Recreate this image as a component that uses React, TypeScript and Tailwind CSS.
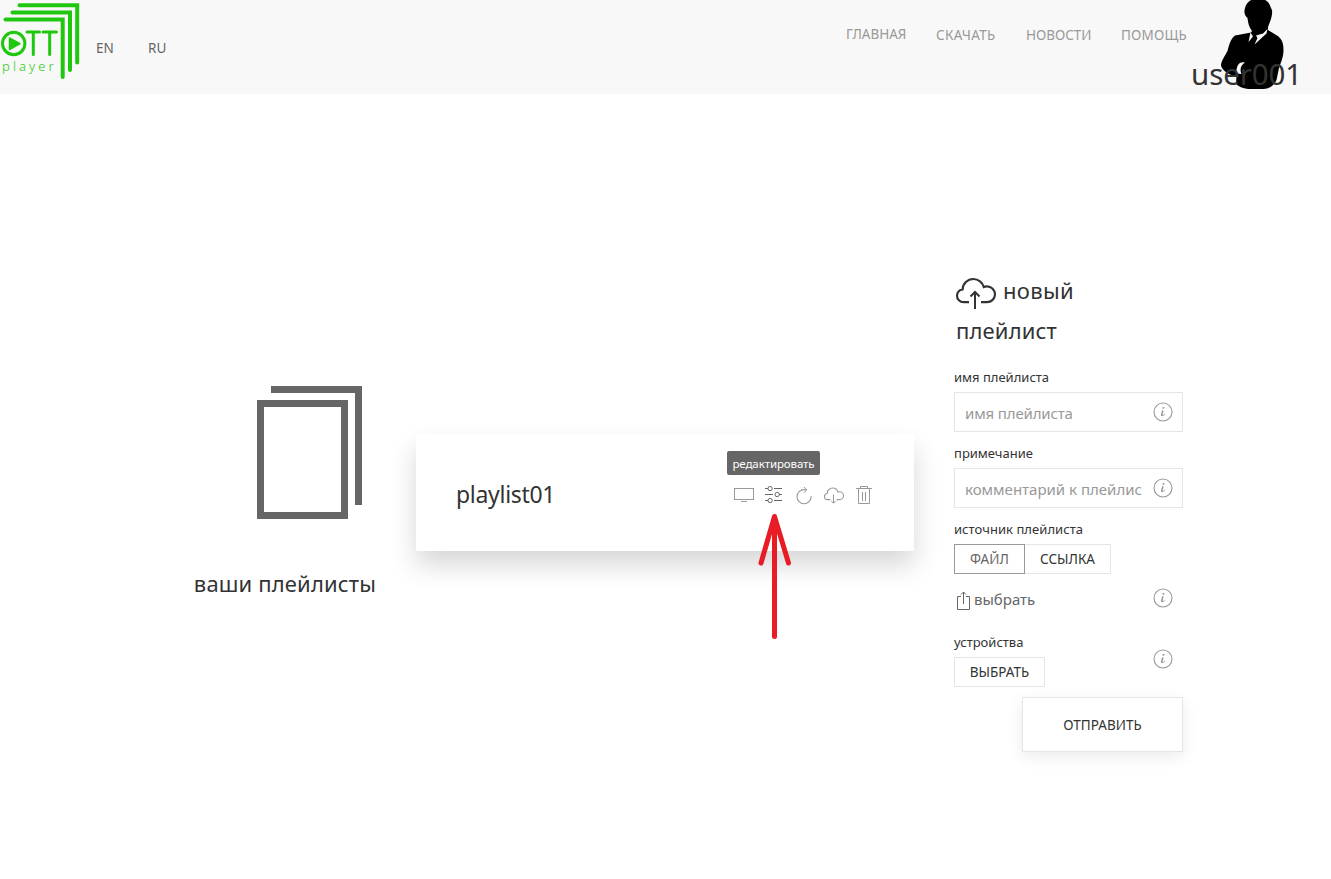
import type { ReactNode } from 'react';

const CLOUD =
  'M6.5,14.61 L3.75,14.61 C1.96,14.61 0.5,13.17 0.5,11.39 C0.5,9.76 1.72,8.41 3.31,8.2 C3.38,5.31 5.75,3 8.68,3 C11.19,3 13.31,4.71 13.89,7.02 C14.39,6.8 14.93,6.68 15.5,6.68 C17.71,6.68 19.5,8.45 19.5,10.64 C19.5,12.83 17.71,14.6 15.5,14.6 L12.5,14.6';

function Icon({ className, children }: { className: string; children: ReactNode }) {
  return (
    <svg viewBox="0 0 20 20" className={'block shrink-0 overflow-visible ' + className} fill="none" stroke="currentColor">
      {children}
    </svg>
  );
}

function InfoIcon() {
  return (
    <Icon className="h-5 w-5 text-[#999]">
      <path
        stroke="none"
        fill="currentColor"
        d="M12.13,11.59 C11.97,12.84 10.35,14.12 9.1,14.16 C6.17,14.2 9.89,9.46 8.74,8.37 C9.3,8.16 10.62,7.83 10.62,8.81 C10.62,9.63 10.12,10.55 9.88,11.32 C8.66,15.16 12.13,11.15 12.14,11.18 C12.16,11.21 12.16,11.35 12.13,11.59 Z M11.56,5.67 C11.56,6.67 9.36,7.15 9.36,6.03 C9.36,5 11.56,4.54 11.56,5.67 Z"
      />
      <circle cx="10" cy="10" r="9" strokeWidth="1.1" />
    </Icon>
  );
}

function Logo() {
  return (
    <div className="relative h-[82px] w-[82px] shrink-0 text-[#1fc80f]">
      <svg viewBox="0 0 82 82" className="block h-[82px] w-[82px]" fill="none" stroke="currentColor" strokeWidth="4" strokeLinecap="round">
        <path d="M19.5 5.3H77.2V62.5M12.5 12.5H70V70M5.5 19.5H62.7V77" />
        <circle cx="13.7" cy="43.5" r="11.2" strokeWidth="3" />
        <path d="M9.5 38V49.5L20 43.7Z" fill="currentColor" strokeWidth="1.5" strokeLinejoin="round" />
        <path d="M27 32H39.5M43 32H56.5M33.3 32V54.5M49.7 32V54.5" strokeWidth="3" />
      </svg>
      <span className="absolute left-[2px] top-[57px] text-[13px] font-light leading-[18px] tracking-[3.1px]">player</span>
    </div>
  );
}

function Avatar() {
  return (
    <svg viewBox="0 0 66 90" className="block h-[90px] w-[66px]">
      <path
        d="M32 0H46C50 2 51 5 52 8C54 11 53 15 52 19C51 22 50 24 49 27L49 30L58 35.5C63 39 64.5 43 64.5 50C64.5 57 62 62 60 68L57.5 80C55 86 50 88.5 44 89H32C26 89 20 87 17 84L17.5 76C12 76 3 71 2 65.5C2 61 6 56 8.5 51C10 45 12 38 16 35.5L32 32.5L33 31C30 27 29 23 28.5 18C25 15 25 11 26 8C27 4 29 2 32 0Z"
        fill="#000"
      />
      <path d="M31.5 32.5L29.5 42L34 36.5ZM48.5 29L44 33.5L37 35.5L38.5 38L35.5 44.5L47.5 33.5Z" fill="#f8f8f8" />
      <path d="M26 62.5C20 61 17 66 17.5 73.5L22.5 74C20.5 69 22 65 26 62.5Z" fill="#f8f8f8" />
    </svg>
  );
}

const NAV = [
  { label: 'ГЛАВНАЯ', cls: 'w-[90px] tracking-[-0.05px]' },
  { label: 'СКАЧАТЬ', cls: 'w-[90px] tracking-[0.3px] pt-px' },
  { label: 'НОВОСТИ', cls: 'w-[95px] tracking-[-0.05px] pt-px' },
  { label: 'ПОМОЩЬ', cls: 'w-[70px] tracking-[0.2px] pt-px' },
];

function Header() {
  return (
    <header className="flex h-[94px] items-start bg-[#f8f8f8]">
      <Logo />
      <div className="flex pl-[14px] pt-[38px] text-[13.5px] leading-5 text-[#666]">
        <span className="w-[52px]">EN</span>
        <span>RU</span>
      </div>
      <nav className="ml-auto flex pt-[24px] text-[13.5px] leading-5 text-[#999]">
        {NAV.map((n) => (
          <span key={n.label} className={'whitespace-nowrap ' + n.cls}>
            {n.label}
          </span>
        ))}
      </nav>
      <div className="relative h-[94px] w-[140px] pl-[28px]">
        <Avatar />
        <span className="absolute left-0 top-[54px] text-[29.5px] leading-[40px] tracking-[-0.1px] text-[#333]">user001</span>
      </div>
    </header>
  );
}

function PlaylistCard() {
  return (
    <section className="relative ml-10 mt-[340px] flex h-[117px] w-[498px] items-start justify-between bg-white pl-10 pr-10 shadow-[0_14px_25px_rgba(0,0,0,0.16)]">
      <h3 className="mt-[43px] text-[23px] leading-[35px] tracking-[-0.3px] text-[#333]">playlist01</h3>
      <div className="mt-[51px] flex gap-[10px] text-[#999]">
        <Icon className="h-5 w-5">
          <rect x="7" y="16" width="6" height="1" fill="currentColor" stroke="none" />
          <rect x=".5" y="3.5" width="19" height="11" />
        </Icon>
        <Icon className="h-5 w-5 text-[#666]">
          <ellipse cx="6.11" cy="3.55" rx="2.11" ry="2.15" />
          <ellipse cx="6.11" cy="15.55" rx="2.11" ry="2.15" />
          <circle cx="13.15" cy="9.55" r="2.15" />
          <path stroke="none" fill="currentColor" d="M1 3h3v1H1zM10 3h8v1h-8zM1 9h8v1H1zM15 9h3v1h-3zM1 15h3v1H1zM10 15h8v1h-8z" />
        </Icon>
        <Icon className="h-5 w-5">
          <path
            strokeWidth="1.1"
            d="M17.08,11.15 C17.09,11.31 17.1,11.47 17.1,11.64 C17.1,15.53 13.94,18.69 10.05,18.69 C6.16,18.68 3,15.53 3,11.63 C3,7.74 6.16,4.58 10.05,4.58 C10.9,4.58 11.71,4.73 12.46,5"
          />
          <polyline points="9.9 2 12.79 4.89 9.79 7.9" />
        </Icon>
        <Icon className="h-5 w-5">
          <path strokeWidth="1.1" d={CLOUD} />
          <polyline points="11.75 16 9.5 18.25 7.25 16" />
          <path d="M9.5,18 L9.5,9.5" />
        </Icon>
        <Icon className="h-5 w-5">
          <polyline points="6.5 3 6.5 1.5 13.5 1.5 13.5 3" />
          <polyline points="4.5 4 4.5 18.5 15.5 18.5 15.5 4" />
          <path stroke="none" fill="currentColor" d="M8 7h1v9H8zM11 7h1v9h-1zM2 3h16v1H2z" />
        </Icon>
      </div>
      <div className="absolute left-[311px] top-[17px] flex h-6 w-[93px] items-center justify-center rounded-[2px] bg-[#666] pt-0.5 text-[11.5px] tracking-[-0.1px] text-white">
        редактировать
      </div>
      <svg viewBox="0 0 36 130" className="absolute left-[341px] top-[78px] h-[130px] w-9" fill="none" stroke="#e81c24" strokeWidth="5" strokeLinecap="round" strokeLinejoin="round">
        <path d="M17.5 4.5V124.5M4 51L17.5 4.5L31.5 51" />
      </svg>
    </section>
  );
}

function Field({ label, placeholder, cls }: { label: string; placeholder: string; cls: string }) {
  return (
    <div className="h-[76px]">
      <div className="h-[24px] text-[13px] leading-[18px] text-[#333]">{label}</div>
      <div className="flex h-10 w-[229px] items-start justify-between border border-[#e5e5e5] pl-[10px] pr-[9px] pt-[9px] text-[#999]">
        <span className={'-mt-px whitespace-nowrap text-[15px] leading-6 ' + cls}>{placeholder}</span>
        <InfoIcon />
      </div>
    </div>
  );
}

function PlaylistForm() {
  return (
    <section className="ml-10 w-[229px] pt-[176px]">
      <h3 className="h-[98px] pl-[2px] text-[22px] leading-10 text-[#333]">
        <span className="flex h-10">
          <Icon className="mt-[3px] h-10 w-10">
            <path strokeWidth="1.1" d={CLOUD} />
            <polyline points="7.25 11.75 9.5 9.5 11.75 11.75" />
            <path d="M9.5,18 L9.5,9.5" />
          </Icon>
          <span className="pl-[7px] tracking-[0.3px]">новый</span>
        </span>
        <span className="block tracking-[0.15px]">плейлист</span>
      </h3>
      <Field label="имя плейлиста" placeholder="имя плейлиста" cls="tracking-[-0.15px]" />
      <Field label="примечание" placeholder="комментарий к плейлис" cls="tracking-[0px]" />
      <div className="h-[24px] text-[13px] leading-[18px] tracking-[0.05px] text-[#333]">источник плейлиста</div>
      <div className="flex h-[30px] text-[13.5px] leading-[28px]">
        <span className="w-[71px] border border-[#999] text-center tracking-[0.1px] text-[#666]">ФАЙЛ</span>
        <span className="w-[86px] border border-l-0 border-[#e5e5e5] text-center tracking-[0px] text-[#333]">ССЫЛКА</span>
      </div>
      <div className="flex h-[62px] items-start justify-between pr-[10px] pt-[14px] text-[#666]">
        <div className="flex">
          <Icon className="mt-[3px] h-5 w-5">
            <path d="M7 5.5H3.5V18.5H15.5V5.5H12M9.5 13V1M7 3.5L9.5 1L12 3.5" />
          </Icon>
          <span className="-mt-px text-[15px] leading-6">выбрать</span>
        </div>
        <InfoIcon />
      </div>
      <div className="flex h-[61px] justify-between pr-[10px]">
        <div>
          <div className="h-[21px] text-[13px] leading-[13px] text-[#333]">устройства</div>
          <div className="h-[30px] w-[91px] border border-[#e5e5e5] text-center text-[13.5px] leading-[28px] tracking-[0px] text-[#333]">ВЫБРАТЬ</div>
        </div>
        <div className="pt-[13px]">
          <InfoIcon />
        </div>
      </div>
      <div className="ml-auto h-[55px] w-[161px] border border-[#e5e5e5] bg-white text-center text-[13.5px] leading-[55px] tracking-[0.05px] text-[#333] shadow-[0_5px_15px_rgba(0,0,0,0.08)]">
        ОТПРАВИТЬ
      </div>
    </section>
  );
}

export default function App() {
  return (
    <div className="h-[879px] w-[1331px] overflow-hidden bg-white font-['Noto_Sans','Open_Sans',sans-serif]">
      <Header />
      <main className="flex items-start">
        <section className="flex w-[376px] flex-col items-end pt-[292px]">
          <Icon className="h-[140px] w-[140px] text-[#666]">
            <rect x="3.5" y="2.5" width="12" height="16" />
            <polyline points="5 .5 17.5 .5 17.5 17" />
          </Icon>
          <h3 className="mt-[37px] whitespace-nowrap text-[22px] leading-10 tracking-[0.15px] text-[#333]">ваши плейлисты</h3>
        </section>
        <PlaylistCard />
        <PlaylistForm />
      </main>
    </div>
  );
}
